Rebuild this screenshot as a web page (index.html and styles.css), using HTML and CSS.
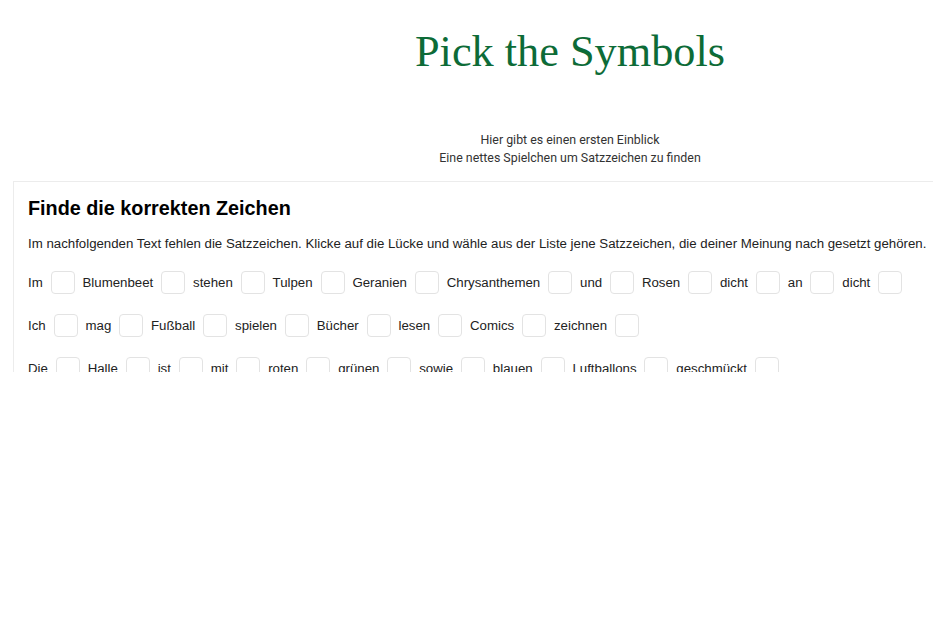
FILE: index.html
```html
<!DOCTYPE html>
<html lang="de">
<head>
<meta charset="utf-8">
<title>Pick the Symbols</title>
<link rel="stylesheet" href="styles.css">
</head>
<body>
<div class="page">
  <header class="header">
    <h1 class="title">Pick the Symbols</h1>
    <p class="subtitle">Hier gibt es einen ersten Einblick<br>Eine nettes Spielchen um Satzzeichen zu finden</p>
  </header>
  <section class="card">
    <h2 class="card-title">Finde die korrekten Zeichen</h2>
    <p class="intro">Im nachfolgenden Text fehlen die Satzzeichen. Klicke auf die Lücke und wähle aus der Liste jene Satzzeichen, die deiner Meinung nach gesetzt gehören.</p>
    <div class="row">
      <span class="word">Im</span><span class="gap"></span>
      <span class="word">Blumenbeet</span><span class="gap"></span>
      <span class="word">stehen</span><span class="gap"></span>
      <span class="word">Tulpen</span><span class="gap"></span>
      <span class="word">Geranien</span><span class="gap"></span>
      <span class="word">Chrysanthemen</span><span class="gap"></span>
      <span class="word">und</span><span class="gap"></span>
      <span class="word">Rosen</span><span class="gap"></span>
      <span class="word">dicht</span><span class="gap"></span>
      <span class="word">an</span><span class="gap"></span>
      <span class="word">dicht</span><span class="gap"></span>
    </div>
    <div class="row">
      <span class="word">Ich</span><span class="gap"></span>
      <span class="word">mag</span><span class="gap"></span>
      <span class="word">Fußball</span><span class="gap"></span>
      <span class="word">spielen</span><span class="gap"></span>
      <span class="word">Bücher</span><span class="gap"></span>
      <span class="word">lesen</span><span class="gap"></span>
      <span class="word">Comics</span><span class="gap"></span>
      <span class="word">zeichnen</span><span class="gap"></span>
    </div>
    <div class="row">
      <span class="word">Die</span><span class="gap"></span>
      <span class="word">Halle</span><span class="gap"></span>
      <span class="word">ist</span><span class="gap"></span>
      <span class="word">mit</span><span class="gap"></span>
      <span class="word">roten</span><span class="gap"></span>
      <span class="word">grünen</span><span class="gap"></span>
      <span class="word">sowie</span><span class="gap"></span>
      <span class="word">blauen</span><span class="gap"></span>
      <span class="word">Luftballons</span><span class="gap"></span>
      <span class="word">geschmückt</span><span class="gap"></span>
    </div>
  </section>
</div>
</body>
</html>
```
FILE: styles.css
```css
html, body {
  margin: 0;
  padding: 0;
  background: #fff;
  overflow: hidden;
}
.page {
  width: 1114px;
  margin-left: 13px;
  height: 372px;
  overflow: hidden;
}
.header {
  text-align: center;
  height: 181px;
  box-sizing: border-box;
  padding-top: 26px;
}
.title {
  margin: 0;
  font-family: "Liberation Serif", "Times New Roman", serif;
  font-weight: normal;
  font-size: 44.3px;
  line-height: 52px;
  color: #0d6b37;
}
.subtitle {
  margin: 53px 0 0;
  font-family: Roboto, "Noto Sans", sans-serif;
  font-size: 12.4px;
  line-height: 18px;
  color: #333;
}
.card {
  border-top: 1px solid #ececec;
  border-left: 1px solid #ececec;
  padding: 13px 0 0 14px;
  font-family: "Liberation Sans", Arial, sans-serif;
  color: #222;
}
.card-title {
  margin: 0;
  font-size: 19.8px;
  line-height: 26px;
  font-weight: bold;
  color: #000;
}
.intro {
  margin: 13px 0 0;
  font-size: 13.25px;
  line-height: 20px;
}
.row {
  display: flex;
  align-items: center;
  gap: 7.9px;
  margin-top: 16px;
  height: 25px;
  font-size: 13.25px;
}
.row + .row {
  margin-top: 18px;
}
.word {
  line-height: 20px;
}
.gap {
  width: 22px;
  height: 21px;
  border: 1px solid #e3e3e3;
  border-radius: 4px;
  background: #fff;
}
```
